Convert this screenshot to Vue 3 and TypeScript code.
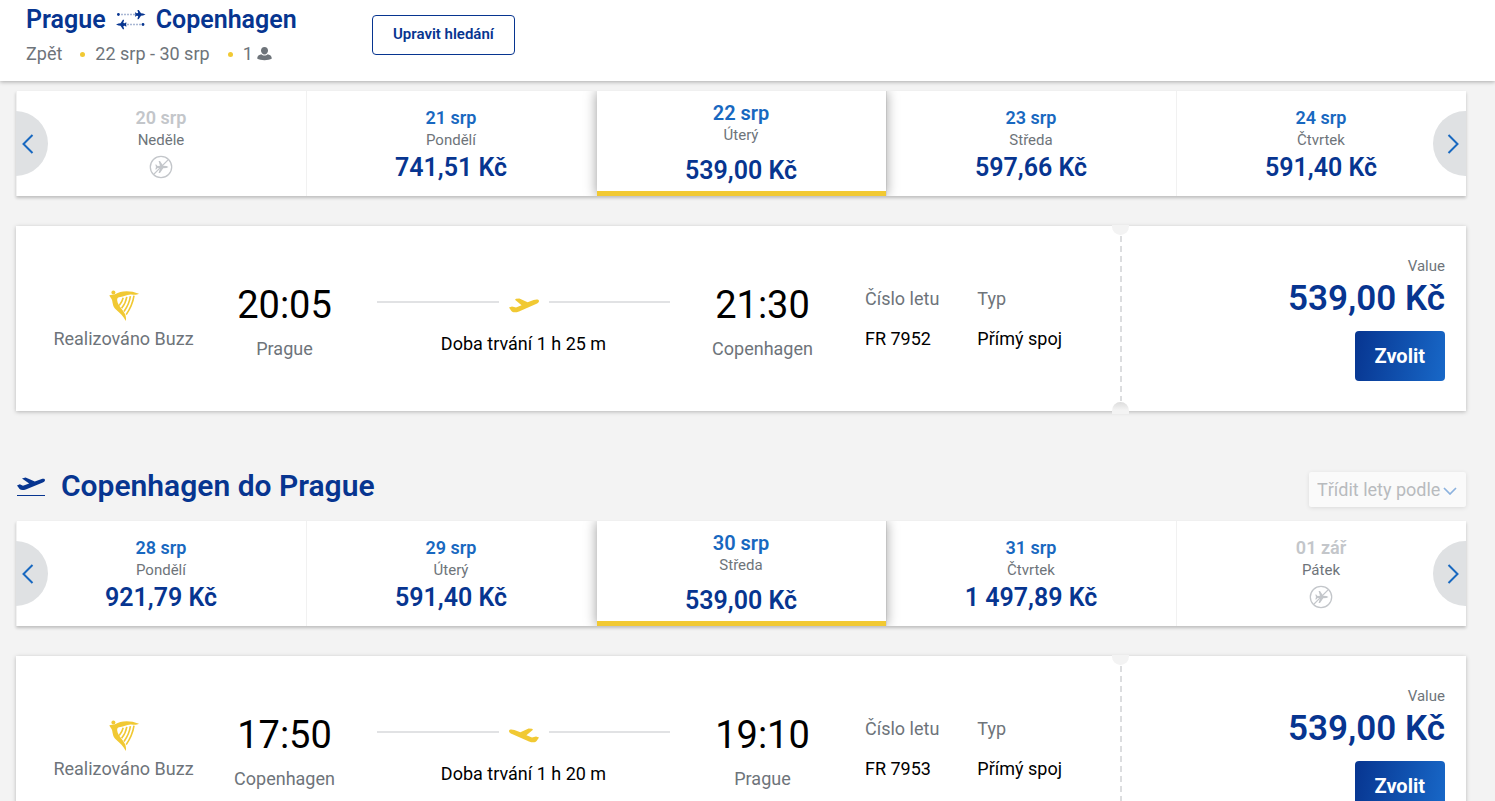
<script setup lang="ts">
interface Day {
  date: string
  weekday: string
  price?: string
  selected?: boolean
}

interface Flight {
  departure: string
  origin: string
  arrival: string
  destination: string
  duration: string
  code: string
  price: string
  landing: boolean
}

interface Leg {
  id: string
  title?: string
  days: Day[]
  flight: Flight
}

const legs: Leg[] = [
  {
    id: 'outbound',
    days: [
      { date: '20 srp', weekday: 'Neděle' },
      { date: '21 srp', weekday: 'Pondělí', price: '741,51 Kč' },
      { date: '22 srp', weekday: 'Úterý', price: '539,00 Kč', selected: true },
      { date: '23 srp', weekday: 'Středa', price: '597,66 Kč' },
      { date: '24 srp', weekday: 'Čtvrtek', price: '591,40 Kč' },
    ],
    flight: {
      departure: '20:05',
      origin: 'Prague',
      arrival: '21:30',
      destination: 'Copenhagen',
      duration: 'Doba trvání 1 h 25 m',
      code: 'FR 7952',
      price: '539,00 Kč',
      landing: false,
    },
  },
  {
    id: 'inbound',
    title: 'Copenhagen do Prague',
    days: [
      { date: '28 srp', weekday: 'Pondělí', price: '921,79 Kč' },
      { date: '29 srp', weekday: 'Úterý', price: '591,40 Kč' },
      { date: '30 srp', weekday: 'Středa', price: '539,00 Kč', selected: true },
      { date: '31 srp', weekday: 'Čtvrtek', price: '1 497,89 Kč' },
      { date: '01 zář', weekday: 'Pátek' },
    ],
    flight: {
      departure: '17:50',
      origin: 'Copenhagen',
      arrival: '19:10',
      destination: 'Prague',
      duration: 'Doba trvání 1 h 20 m',
      code: 'FR 7953',
      price: '539,00 Kč',
      landing: true,
    },
  },
]
</script>

<template>
  <div class="page">
    <header class="topbar">
      <div class="trip">
        <h1 class="trip-title">
          <span>Prague</span>
          <svg class="trip-arrows" width="30" height="20" viewBox="0 0 30 20" aria-hidden="true">
            <g fill="#073590">
              <circle cx="2.4" cy="4.5" r="1.4" />
              <path d="M29.5 4.5 L27 5.5 L25 5.8 L22.6 9.2 L21.4 9.2 L22.2 5.9 L20.6 5.7 L19.8 6.6 L19 6.6 L19.4 4.5 L19 2.4 L19.8 2.4 L20.6 3.3 L22.2 3.1 L21.4 -.2 L22.6 -.2 L25 3.2 L27 3.5 Z" />
              <circle cx="27" cy="14.5" r="1.4" />
              <path d="M0 14.5 L2.5 13.5 L4.5 13.2 L6.9 9.8 L8.1 9.8 L7.3 13.1 L8.9 13.3 L9.7 12.4 L10.5 12.4 L10.1 14.5 L10.5 16.6 L9.7 16.6 L8.9 15.7 L7.3 15.9 L8.1 19.2 L6.9 19.2 L4.5 15.8 L2.5 15.5 Z" />
            </g>
            <path d="M5 4.5 H19 M11 14.5 H25" stroke="#a9b7d4" stroke-width="1.4" stroke-dasharray="2 1" />
          </svg>
          <span>Copenhagen</span>
        </h1>
        <div class="trip-info">
          <span>Zpět</span>
          <i class="dot"></i>
          <span>22 srp - 30 srp</span>
          <i class="dot"></i>
          <span class="passengers">1
            <svg width="15" height="14" viewBox="0 0 15 14" fill="#6e747a" aria-hidden="true">
              <path d="M7.5 0 C9.8 0 11 1.6 11 3.6 C11 5.8 9.5 7.6 7.5 7.6 C5.5 7.6 4 5.8 4 3.6 C4 1.6 5.2 0 7.5 0 Z" />
              <path d="M4.2 7.2 C6 8.9 9 8.9 10.8 7.2 C13.5 7.8 15 9.4 14.7 11.8 C11.8 13.7 3.2 13.7 .3 11.8 C0 9.4 1.5 7.8 4.2 7.2 Z" />
            </svg>
          </span>
        </div>
      </div>
      <button class="edit" type="button">Upravit hledání</button>
    </header>

    <main class="results">
      <section v-for="leg in legs" :key="leg.id" class="leg">
        <div v-if="leg.title" class="leg-head">
          <h2 class="leg-title">
            <svg width="29" height="22" viewBox="0 0 29 22" aria-hidden="true">
              <path fill="#073590" transform="translate(1 2)" d="M0 8.4 L2.8 7.2 L6 8.8 L12.2 6.6 L5 1.5 L8.6 .6 L17.8 4.4 L24 2.2 C26.4 1.4 27.8 1.6 28 3 C28 4.3 27.2 5 25.8 5.6 L8.8 12.4 C6 13.4 3.8 13.2 2.6 12 Z" />
              <path d="M1 20.5 H29" stroke="#073590" />
            </svg>
            {{ leg.title }}
          </h2>
          <div class="sort">
            <select aria-label="Třídit lety podle">
              <option>Třídit lety podle</option>
            </select>
            <svg class="sort-chevron" width="14" height="8" viewBox="0 0 14 8" aria-hidden="true">
              <path d="M1 1 L7 7 L13 1" fill="none" stroke="#8cb2de" stroke-width="1.7" />
            </svg>
          </div>
        </div>

        <div class="carousel">
          <div class="carousel-clip">
            <ul class="days">
              <li v-for="day in leg.days" :key="day.date">
                <button
                  type="button"
                  class="day"
                  :class="{ selected: day.selected, unavailable: !day.price }"
                  :disabled="!day.price"
                >
                  <span class="day-date">{{ day.date }}</span>
                  <span class="day-name">{{ day.weekday }}</span>
                  <span v-if="day.price" class="day-price">{{ day.price }}</span>
                  <svg v-else class="no-flight" width="24" height="24" viewBox="0 0 24 24" aria-hidden="true">
                    <circle cx="12" cy="12" r="10.7" fill="none" stroke="#c3c6ca" stroke-width="1.3" />
                    <path fill="#c3c6ca" d="M19.5 12 L17.5 13.1 L14.2 13.2 L11 18 L9.6 18 L11 13.2 L8.6 13 L7.2 14.6 L6.3 14.6 L7 12 L6.3 9.4 L7.2 9.4 L8.6 11 L11 10.8 L9.6 6 L11 6 L14.2 10.8 L17.5 10.9 Z" />
                    <path d="M4.4 19.6 L19.6 4.4" stroke="#c3c6ca" stroke-width="1.3" />
                  </svg>
                </button>
              </li>
            </ul>
            <button class="arrow prev" type="button" aria-label="Předchozí">
              <svg width="12" height="20" viewBox="0 0 12 20" aria-hidden="true">
                <path d="M10.5 1 L1.5 10 L10.5 19" />
              </svg>
            </button>
            <button class="arrow next" type="button" aria-label="Další">
              <svg width="12" height="20" viewBox="0 0 12 20" aria-hidden="true">
                <path d="M1.5 1 L10.5 10 L1.5 19" />
              </svg>
            </button>
          </div>
        </div>

        <article class="card">
          <div class="card-main">
            <div class="operator">
              <svg width="30" height="31" viewBox="0 0 30 31" fill="#f1c933" aria-hidden="true">
                <circle cx="4.4" cy="2.6" r="2" />
                <path d="M.2 5.4 C2 4.4 4.6 5.2 6.6 4 C11 1.2 20 -.4 30 3.8 C27.6 5.2 25 4.8 22 4.6 C17.6 4.4 14.6 7 11.4 7 C9 7 8 8 8.2 10.4 C8.8 16 14.4 19.4 16.4 25 C17 27 17.2 29 16.8 31 C14.6 26.2 10.8 23 7.2 19.8 C3.4 16.4 3.8 12.6 3 10 C2.4 8 1.2 7 .2 5.4 Z" />
                <path d="M14.2 7.8 C13.4 11 12.2 13.2 10.2 15.6 M17.8 6.8 C17 11.4 15.4 14.8 12.6 18.2 M21.4 6.2 C20.6 12 18.6 16.6 15 21.4 M25 5.6 C24 12 21.4 18.4 17.2 24.6" fill="none" stroke="#f1c933" stroke-width="1.6" />
              </svg>
              <span>Realizováno Buzz</span>
            </div>

            <div class="stop">
              <span class="time">{{ leg.flight.departure }}</span>
              <span class="city">{{ leg.flight.origin }}</span>
            </div>

            <div class="route">
              <div class="route-line">
                <svg width="30" height="16" viewBox="0 0 30 16" fill="#f1c933" aria-hidden="true">
                  <path
                    :transform="leg.flight.landing ? 'translate(30 0) scale(-1 1)' : undefined"
                    d="M0 10.6 L3 9.6 L7 10.6 L12.6 8.2 L6 2.8 L7 1.8 L10.4 1.6 L18.6 5.2 L24.6 3.1 C27.4 2.2 29.8 2.4 30 4.1 C30 5.6 28.6 6.4 27 7.1 L10 14.4 C7 15.6 3.6 15.8 2.4 14 Z"
                  />
                </svg>
              </div>
              <span class="duration">{{ leg.flight.duration }}</span>
            </div>

            <div class="stop">
              <span class="time">{{ leg.flight.arrival }}</span>
              <span class="city">{{ leg.flight.destination }}</span>
            </div>

            <dl class="details">
              <div>
                <dt>Číslo letu</dt>
                <dd>{{ leg.flight.code }}</dd>
              </div>
              <div>
                <dt>Typ</dt>
                <dd>Přímý spoj</dd>
              </div>
            </dl>
          </div>

          <div class="fare">
            <span class="fare-name">Value</span>
            <strong class="fare-price">{{ leg.flight.price }}</strong>
            <button class="choose" type="button">Zvolit</button>
          </div>
        </article>
      </section>
    </main>
  </div>
</template>

<style>
body {
  background: #f3f3f3;
}
</style>

<style scoped>
.page,
.page * {
  box-sizing: border-box;
}

.page {
  display: flex;
  flex-direction: column;
  height: 100vh;
  overflow: hidden;
  background: #f3f3f3;
  color: #6e747a;
  font-family: Roboto, "Liberation Sans", sans-serif;
  font-size: 18px;
  font-weight: 400;
}

button,
select {
  font-family: inherit;
  cursor: pointer;
}

h1,
h2,
ul,
dl,
dd {
  margin: 0;
  padding: 0;
}

.topbar {
  position: relative;
  z-index: 2;
  display: flex;
  flex: none;
  align-items: flex-start;
  padding: 4px 26px 14px;
  background: #fff;
  box-shadow: 0 1px 4px rgba(0, 0, 0, 0.3);
}

.trip {
  min-width: 346px;
}

.trip-title {
  display: flex;
  align-items: center;
  gap: 10px;
  color: #073590;
  font-size: 25px;
  font-weight: 600;
  line-height: 32px;
}

.trip-info {
  display: flex;
  align-items: center;
  margin-top: 5px;
  line-height: 26px;
}

.dot {
  width: 5px;
  height: 5px;
  margin: 0 10px 0 18px;
  border-radius: 50%;
  background: #f1c933;
}

.passengers {
  display: flex;
  align-items: center;
  gap: 4px;
}

.edit {
  height: 40px;
  margin-top: 11px;
  padding: 0 20px 2px;
  border: 1px solid #073590;
  border-radius: 4px;
  background: #fff;
  color: #073590;
  font-size: 15px;
  font-weight: 600;
}

.results {
  flex: 1;
  min-height: 0;
  padding: 10px 29px 0 16px;
  overflow-y: auto;
  scrollbar-width: none;
}

.leg + .leg {
  margin-top: 60px;
}

.leg-head {
  display: flex;
  align-items: center;
  justify-content: space-between;
  margin-bottom: 14px;
}

.leg-title {
  display: flex;
  align-items: center;
  gap: 16px;
  padding-bottom: 6px;
  color: #073590;
  font-size: 30px;
  font-weight: 600;
  line-height: 30px;
}

.sort {
  position: relative;
}

.sort select {
  display: block;
  height: 35px;
  padding: 0 25px 0 8px;
  appearance: none;
  border: 0;
  border-radius: 2px;
  background: #fafafa;
  box-shadow: 0 1px 4px rgba(0, 0, 0, 0.1);
  color: #b8bbbe;
  font-size: 18px;
}

.sort-chevron {
  position: absolute;
  top: 15px;
  right: 9px;
  pointer-events: none;
}

.carousel {
  box-shadow: 0 2px 3px rgba(0, 0, 0, 0.22);
}

.carousel-clip {
  position: relative;
  overflow: hidden;
  background: #fff;
}

.days {
  display: grid;
  grid-template-columns: repeat(5, 1fr);
  list-style: none;
}

.day {
  display: flex;
  flex-direction: column;
  align-items: center;
  width: 100%;
  height: 105px;
  padding: 16px 1px 0 0;
  border: 0;
  border-left: 1px solid #f1f1f1;
  background: #fff;
  color: #6e747a;
}

.day-date {
  color: #1868c0;
  font-size: 18px;
  font-weight: 600;
  line-height: 22px;
}

.day-name {
  font-size: 15px;
  line-height: 22px;
}

.day-price {
  color: #073590;
  font-size: 25px;
  font-weight: 600;
  line-height: 34px;
}

.unavailable .day-date {
  color: #c3c6ca;
}

.no-flight {
  margin-top: 4px;
}

.selected {
  position: relative;
  z-index: 1;
  width: calc(100% - 1px);
  margin-left: 1px;
  padding-top: 11px;
  border-left: 0;
  border-bottom: 5px solid #f1c933;
  box-shadow: 0 0 12px rgba(0, 0, 0, 0.4);
}

.selected .day-date {
  font-size: 20px;
}

.selected .day-price {
  margin-top: 8px;
}

.arrow {
  position: absolute;
  z-index: 2;
  top: 20px;
  display: flex;
  align-items: center;
  width: 65px;
  height: 65px;
  padding: 0;
  border: 0;
  border-radius: 50%;
  background: #dfe1e3;
}

.arrow path {
  fill: none;
  stroke: #1868c0;
  stroke-width: 2;
}

.prev {
  left: -33px;
  justify-content: flex-end;
  padding-right: 14px;
}

.next {
  right: -32px;
  padding-left: 14px;
}

.card {
  display: flex;
  height: 185px;
  margin-top: 30px;
  background: #fff;
  box-shadow: 0 1px 4px rgba(0, 0, 0, 0.25);
}

.card-main {
  display: grid;
  flex: 1;
  grid-template-columns: 215fr 107fr 371fr 107fr 304fr;
}

.operator,
.stop,
.route {
  display: flex;
  flex-direction: column;
  align-items: center;
  white-space: nowrap;
}

.operator {
  gap: 6px;
  padding-top: 64px;
  line-height: 24px;
}

.stop {
  padding-top: 57px;
}

.time {
  color: #000;
  font-size: 38px;
  line-height: 44px;
}

.city {
  margin-top: 9px;
  line-height: 26px;
}

.route {
  padding: 71px 39px 0;
}

.route-line {
  display: flex;
  gap: 10px;
  width: 100%;
}

.route-line::before,
.route-line::after {
  flex: 1;
  height: 2px;
  margin-top: 4px;
  background: #e1e2e4;
  content: "";
}

.duration {
  margin-top: 19px;
  color: #000;
  line-height: 24px;
}

.details {
  display: flex;
  gap: 38px;
  padding: 61px 0 0 49px;
  line-height: 24px;
  white-space: nowrap;
}

.details dd {
  margin-top: 16px;
  color: #000;
}

.fare {
  position: relative;
  display: flex;
  flex-direction: column;
  align-items: flex-end;
  width: 346px;
  padding: 30px 21px 0 0;
  background: repeating-linear-gradient(#dcdddf 0 6px, transparent 6px 10px) 0 10px / 2px 165px no-repeat;
}

.fare::before,
.fare::after {
  position: absolute;
  left: -8px;
  width: 17px;
  height: 10px;
  background: #f3f3f3;
  content: "";
}

.fare::before {
  top: -1px;
  border-radius: 0 0 9px 9px;
}

.fare::after {
  bottom: -3px;
  height: 12px;
  border-radius: 9px 9px 0 0;
  background: linear-gradient(#dcdcdc, #f3f3f3 8px);
}

.fare-name {
  font-size: 15px;
  line-height: 20px;
}

.fare-price {
  color: #073590;
  font-size: 35px;
  font-weight: 600;
  line-height: 46px;
}

.choose {
  height: 50px;
  margin-top: 9px;
  padding: 0 20px;
  border: 0;
  border-radius: 4px;
  background: linear-gradient(100deg, #073590, #1868c8);
  color: #fff;
  font-size: 20px;
  font-weight: 700;
}
</style>
